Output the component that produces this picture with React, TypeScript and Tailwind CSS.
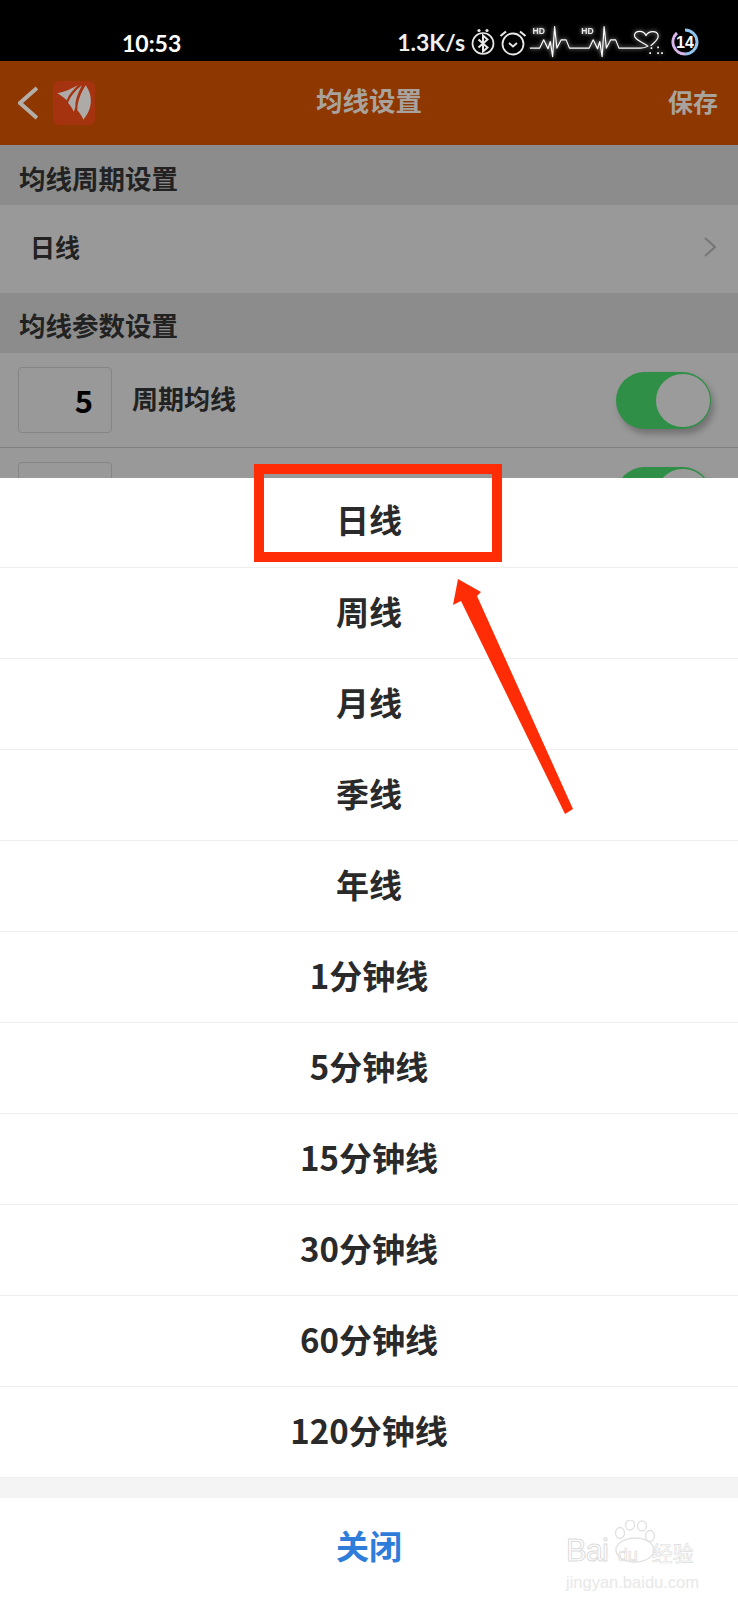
const FONT = "font-['Noto_Sans_CJK_SC','Noto_Sans',sans-serif]";

const OPTIONS = ["周线", "月线", "季线", "年线", "1分钟线", "5分钟线", "15分钟线", "30分钟线", "60分钟线", "120分钟线"];

function Toggle() {
  return (
    <div className="flex h-[57px] w-[95px] shrink-0 justify-end rounded-full bg-[#2f8f46] py-[2px] pr-[1px] shadow-[3px_5px_6px_rgba(0,0,0,0.25)]">
      <div className="h-[53px] w-[54px] rounded-full bg-[#9b9b9b]" />
    </div>
  );
}

function ParamRow({ value, label }: { value: string; label: string }) {
  return (
    <div className="flex h-[95px] items-center justify-between border-b border-[#7f7f7f] pl-[18px] pr-[27px]">
      <div className="flex items-center">
        <div className="flex h-[66px] w-[94px] items-center justify-end rounded-[4px] border border-[#858585] pr-[18px] text-[31px] font-bold text-black">
          {value}
        </div>
        <span className="ml-[20px] pb-[6px] text-[26px] font-bold text-[#222]">{label}</span>
      </div>
      <Toggle />
    </div>
  );
}

function SectionHead({ children, pt }: { children: string; pt: string }) {
  return (
    <div className={`flex h-[60px] items-center bg-[#8c8c8c] pl-[19px] text-[26.5px] font-bold text-[#222] ${pt}`}>{children}</div>
  );
}

function StatusIcons() {
  return (
    <div className="flex items-center">
      <svg width="26" height="28" viewBox="0 0 26 28" fill="none" stroke="#e8e8e8" strokeWidth="1.7" className="ml-[5px]">
        <circle cx="13" cy="15.5" r="10.5" />
        <path d="M8.5 11.5l9 8-4.5 4V7.5l4.5 4-9 8" strokeWidth="2" />
        <circle cx="9" cy="2.5" r="1.6" fill="#e8e8e8" stroke="none" />
        <circle cx="17" cy="2.5" r="1.6" fill="#e8e8e8" stroke="none" />
      </svg>
      <svg width="28" height="28" viewBox="0 0 28 28" fill="none" stroke="#e8e8e8" strokeWidth="1.8" className="ml-[3px]">
        <circle cx="14" cy="16" r="10.5" />
        <path d="M10 15l4 3.5 4-3.5" />
        <path d="M1.5 8L7 3.5M26.5 8L21 3.5" strokeWidth="2.2" />
      </svg>
      <svg width="137" height="33" viewBox="480 80 410 100" fill="none" stroke="#fff" strokeWidth="3.5" strokeLinejoin="round" className="ml-[2px] drop-shadow-[0_0_2px_rgba(255,255,255,0.8)]">
        <path d="M480 150H510L522 125L535 152L542 130L549 176L555 85L562 150L575 125H590L600 150H660L672 125L685 152L692 130L699 176L705 85L712 150L725 125H740L750 150H815C825 150 832 148 838 144C820 130 795 125 797 110C800 96 825 95 832 112C840 96 866 96 869 112C870 125 856 135 846 143" />
        <path d="M846 150h5M866 148h5M842 165h5M878 165h5M866 165h5" strokeWidth="5" />
        <text x="488" y="107" fill="#e8e8e8" stroke="none" fontSize="26" fontWeight="700" fontFamily="Liberation Sans, sans-serif">HD</text>
        <text x="636" y="107" fill="#e8e8e8" stroke="none" fontSize="26" fontWeight="700" fontFamily="Liberation Sans, sans-serif">HD</text>
      </svg>
      <svg width="28" height="28" viewBox="0 0 28 28" fill="none" strokeWidth="3" className="ml-[5px]">
        <path d="M14 2A12 12 0 0 1 14 26" stroke="#8fc4f0" />
        <path d="M14 26A12 12 0 0 1 6 5" stroke="#d8b6ea" />
        <text x="14" y="19.5" fill="#fff" stroke="none" fontSize="16" fontWeight="700" textAnchor="middle" fontFamily="Liberation Sans, sans-serif">14</text>
      </svg>
    </div>
  );
}

export default function App() {
  return (
    <div className={`relative h-[1600px] w-[738px] overflow-hidden bg-white ${FONT}`}>
      <div className="flex h-[61px] items-end justify-between bg-black pb-[3px] pl-[122px] pr-[39px] text-white">
        <span className="font-['Lato',sans-serif] text-[23px] font-bold leading-[30px]">10:53</span>
        <div className="flex items-center">
          <span className="font-['Lato',sans-serif] text-[23px] font-bold leading-[30px] text-[#eee]">1.3K/s</span>
          <StatusIcons />
        </div>
      </div>

      <header className="grid h-[84px] grid-cols-[1fr_auto_1fr] items-center bg-[#8f3700] px-[18px]">
        <div className="flex items-center">
          <svg width="20" height="34" viewBox="0 0 20 34" fill="none" stroke="#b4aea8" strokeWidth="4">
            <path d="M19 2L2 17l17 15" />
          </svg>
          <div className="ml-[15px] flex h-[44px] w-[42px] items-center justify-center rounded-[6px] bg-[#a5330f]">
            <svg width="42" height="44" viewBox="9 12 126 132" fill="#aeaaa8">
              <path d="M22 49C42 45 64 36 84 25C72 36 58 50 50 70C42 62 32 55 22 49Z" />
              <path d="M54 78C60 60 76 40 96 25C86 44 76 66 76 88C76 94 73 100 71 104C67 94 61 85 54 78Z" />
              <path d="M82 100C82 74 92 48 107 25C126 50 132 92 100 128C96 118 89 108 82 100Z" />
            </svg>
          </div>
        </div>
        <h1 className="pb-[6px] text-[26.5px] font-bold text-[#a9a39e]">均线设置</h1>
        <span className="justify-self-end pb-[2px] pr-[2px] text-[25px] font-bold text-[#a9a39e]">保存</span>
      </header>

      <SectionHead pt="pt-[5px]">均线周期设置</SectionHead>
      <div className="flex h-[88px] items-center justify-between bg-[#999999] pl-[30px] pr-[22px]">
        <span className="pb-[4px] text-[25px] font-bold text-[#222]">日线</span>
        <svg width="12" height="20" viewBox="0 0 12 20" fill="none" stroke="#767676" strokeWidth="2" className="mb-[4px]">
          <path d="M1 1l10 9-10 9" />
        </svg>
      </div>
      <SectionHead pt="pt-[3px]">均线参数设置</SectionHead>
      <div className="bg-[#999999]">
        <ParamRow value="5" label="周期均线" />
        <ParamRow value="10" label="周期均线" />
      </div>

      <div className="absolute inset-x-0 top-[478px] bottom-0 flex flex-col bg-white">
        <div className="flex h-[90px] shrink-0 items-center justify-center border-b border-[#eeeeee] pb-[6px] text-[33px] font-bold text-[#2a2a2a]">
          日线
        </div>
        {OPTIONS.map((o) => (
          <div key={o} className="flex h-[91px] shrink-0 items-center justify-center border-b border-[#eeeeee] pb-[3px] text-[33px] font-bold text-[#2a2a2a]">
            {o}
          </div>
        ))}
        <div className="h-[20px] shrink-0 bg-[#f4f4f4]" />
        <div className="flex flex-1 items-center justify-center pb-[6px] text-[33px] font-bold text-[#2f7ddb]">关闭</div>
      </div>

      <div className="absolute left-[254px] top-[464px] h-[98px] w-[248px] border-[10px] border-[#ff2c06]" />

      <svg className="absolute left-[450px] top-[576px]" width="128" height="242" viewBox="450 576 128 242" fill="#ff2c06">
        <polygon points="458,579 481,592 477,596 573,809 565,814 461,601 453,605" />
      </svg>

      <div className="absolute left-[566px] top-[1518px] flex w-[134px] flex-col items-start">
        <svg width="46" height="50" viewBox="0 0 46 50" className="absolute left-[48px] top-[2px]" fill="none" stroke="#e2e2e2" strokeWidth="1.4">
          <ellipse cx="6" cy="13" rx="4.5" ry="5.5" />
          <ellipse cx="16" cy="5" rx="4.5" ry="5" />
          <ellipse cx="28" cy="6" rx="4.5" ry="5" />
          <ellipse cx="36" cy="16" rx="4.5" ry="5.5" />
          <ellipse cx="21" cy="30" rx="19" ry="12" />
        </svg>
        <div className="mt-[18px] flex items-baseline font-['Liberation_Sans',sans-serif] text-[31px] leading-[30px] text-white [-webkit-text-stroke:1px_#dcdcdc]">
          <span className="tracking-[-1px]">Bai</span>
          <span className="ml-[10px] text-[18px] [-webkit-text-stroke:0.7px_#dcdcdc]">du</span>
          <span className="ml-[14px] font-['Noto_Sans_CJK_SC',sans-serif] text-[21px] [-webkit-text-stroke:0.6px_#dcdcdc]">经验</span>
        </div>
        <span className="mt-[3px] font-['Liberation_Sans',sans-serif] text-[16.5px] leading-[18px] text-[#e8e8e8]">jingyan.baidu.com</span>
      </div>
    </div>
  );
}
